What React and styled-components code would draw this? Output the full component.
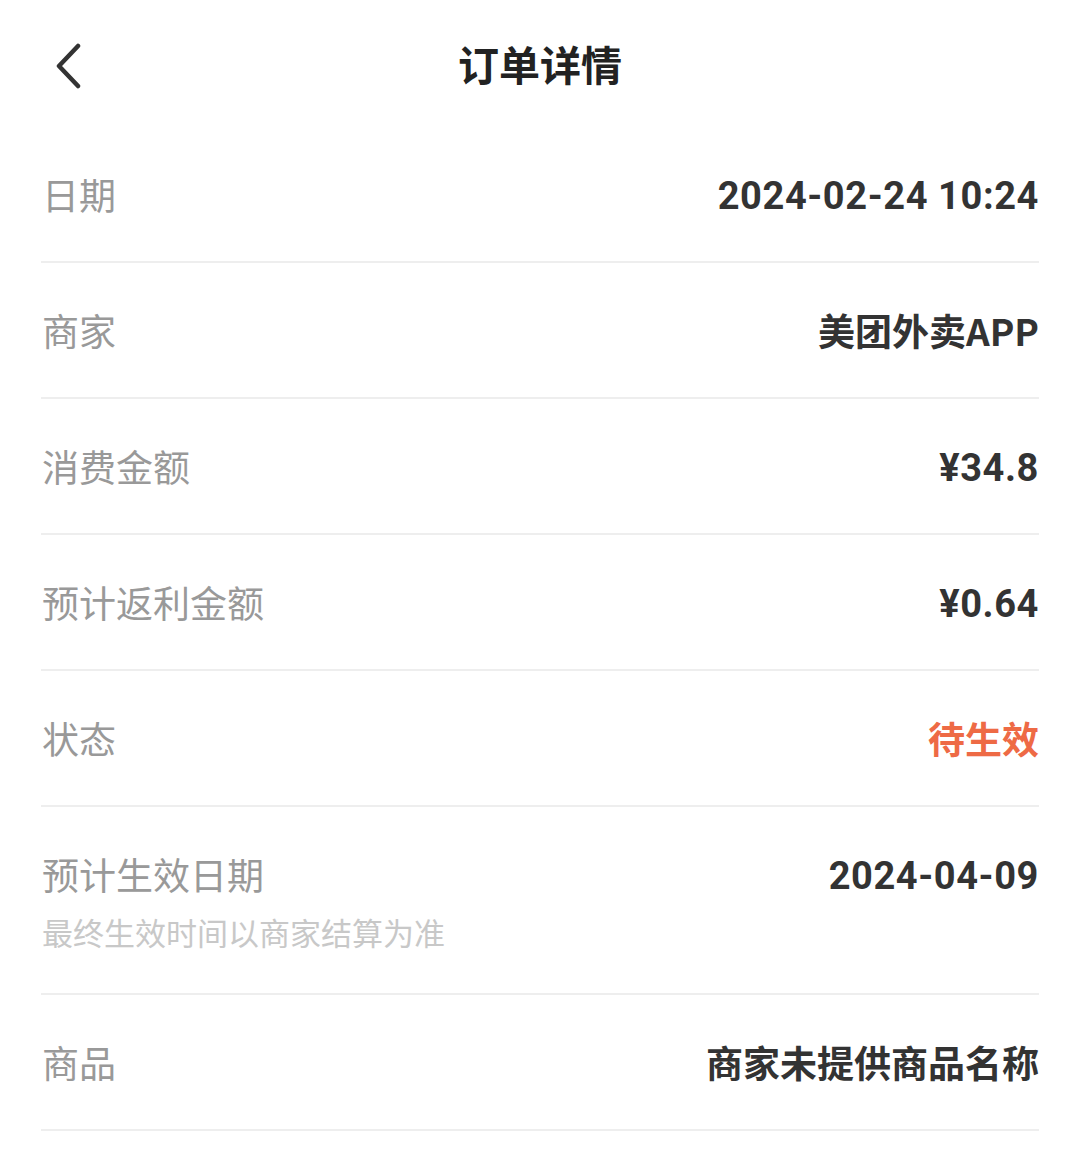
import React from "react";
import styled, { createGlobalStyle } from "styled-components";

const Global = createGlobalStyle`
  html, body { margin: 0; padding: 0; background: #fff; }
  body { font-family: "Noto Sans CJK SC", "Noto Sans", sans-serif; -webkit-font-smoothing: antialiased; }
`;

const Page = styled.div`
  width: 1080px;
  background: #fff;
`;

const Header = styled.header`
  height: 127px;
  display: grid;
  grid-template-columns: 126px 1fr 126px;
  align-items: center;
  box-sizing: border-box;
`;

const BackButton = styled.button`
  border: 0;
  background: none;
  padding: 0 0 0 54px;
  height: 127px;
  display: flex;
  align-items: center;
  justify-content: flex-start;
  margin-top: 2px;
  cursor: pointer;
`;

const Title = styled.h1`
  margin: 0;
  margin-top: -4px;
  text-align: center;
  font-size: 41px;
  line-height: 52px;
  font-weight: 700;
  color: #222;
`;

const List = styled.div`
  padding: 0 41px;
`;

const Row = styled.div`
  display: flex;
  justify-content: space-between;
  align-items: flex-start;
  padding: 41px 0;
  border-bottom: 2px solid #eeeeee;
`;

const LabelCol = styled.div`
  display: flex;
  flex-direction: column;
`;

const Label = styled.div`
  font-size: 37px;
  line-height: 52px;
  color: #999;
  padding-left: 1px;
`;

const Sub = styled.div`
  margin-top: 12px;
  font-size: 31px;
  line-height: 40px;
  color: #c8c8c8;
  padding-left: 1px;
`;

const Value = styled.div`
  font-family: ${(p) => (p.$num ? '"Roboto", "Noto Sans CJK SC", sans-serif' : '"Noto Sans CJK SC", sans-serif')};
  font-size: ${(p) => (p.$num ? "38px" : "37px")};
  line-height: ${(p) => (p.$num ? "47px" : "52px")};
  padding-top: ${(p) => (p.$num ? "5px" : "0")};
  font-weight: 700;
  color: ${(p) => (p.$accent ? "#ee6a45" : "#333")};
  letter-spacing: ${(p) => (p.$num ? "0.6px" : "0")};
`;

const rows = [
  { label: "日期", value: "2024-02-24 10:24", num: true },
  { label: "商家", value: "美团外卖APP" },
  { label: "消费金额", value: "¥34.8", num: true },
  { label: "预计返利金额", value: "¥0.64", num: true },
  { label: "状态", value: "待生效", accent: true },
  { label: "预计生效日期", value: "2024-04-09", num: true, sub: "最终生效时间以商家结算为准" },
  { label: "商品", value: "商家未提供商品名称" },
];

export default function App() {
  return (
    <Page>
      <Global />
      <Header>
        <BackButton aria-label="返回">
          <svg width="30" height="46" viewBox="0 0 30 46">
            <path d="M24 3 L5 23 L24 43" fill="none" stroke="#333" strokeWidth="4.5" strokeLinecap="round" strokeLinejoin="round" />
          </svg>
        </BackButton>
        <Title>订单详情</Title>
        <div />
      </Header>
      <List>
        {rows.map((r) => (
          <Row key={r.label}>
            <LabelCol>
              <Label>{r.label}</Label>
              {r.sub && <Sub>{r.sub}</Sub>}
            </LabelCol>
            <Value $num={r.num} $accent={r.accent}>{r.value}</Value>
          </Row>
        ))}
      </List>
    </Page>
  );
}
